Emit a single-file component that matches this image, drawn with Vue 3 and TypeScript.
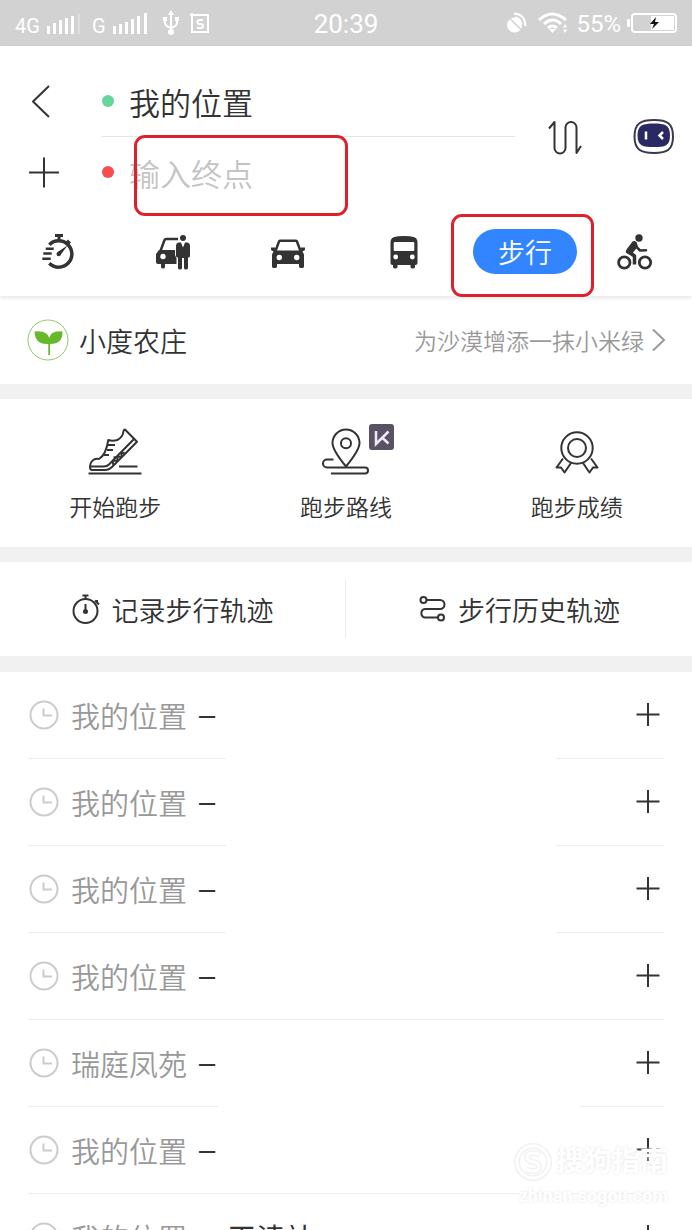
<script setup lang="ts">
import { ref } from 'vue'

interface Trip {
  from: string
  to: string
  rule: 'full' | 'split' | 'narrow'
}

const origin = ref('我的位置')
const destination = ref('')

const trips: Trip[] = [
  { from: '我的位置', to: '', rule: 'split' },
  { from: '我的位置', to: '', rule: 'split' },
  { from: '我的位置', to: '', rule: 'split' },
  { from: '我的位置', to: '', rule: 'full' },
  { from: '瑞庭凤苑', to: '', rule: 'narrow' },
  { from: '我的位置', to: '', rule: 'full' },
  { from: '我的位置', to: '王渎站', rule: 'full' },
]
</script>

<template>
  <div class="page">
    <div class="status">
      <div class="status-side">
        <span class="net">4G</span>
        <svg class="bars" width="36" height="22" viewBox="0 0 36 22" fill="#fff">
          <rect x="1" y="14" width="3" height="8" /><rect x="7" y="11" width="3" height="11" />
          <rect x="13" y="8" width="3" height="14" /><rect x="19" y="6" width="3" height="16" />
          <rect x="25" y="4" width="3" height="18" /><rect x="32" y="2" width="2" height="20" opacity=".3" />
        </svg>
        <span class="net second">G</span>
        <svg class="bars" width="36" height="22" viewBox="0 0 36 22" fill="#fff">
          <rect x="1" y="14" width="3" height="8" /><rect x="7" y="12" width="3" height="10" />
          <rect x="13" y="10" width="3" height="12" /><rect x="19" y="7" width="3" height="15" />
          <rect x="25" y="4" width="3" height="18" /><rect x="32" y="1" width="3" height="21" />
        </svg>
        <svg class="usb" width="18" height="26" viewBox="0 0 18 26" fill="none" stroke="#fff" stroke-width="2">
          <path d="M9 3v18M3 10v3q0 3 6 5M15 9v4q0 3-6 5" />
          <path d="M9 0l3 5H6z" fill="#fff" stroke="none" />
          <circle cx="9" cy="22" r="3" fill="#fff" stroke="none" />
          <path d="M1 7h4v4H1zM13 7h4v4h-4z" fill="#fff" stroke="none" />
        </svg>
        <svg class="sbox" width="22" height="22" viewBox="0 0 22 22" fill="none" stroke="#fff" stroke-width="2">
          <path d="M0 3h18v17H2V1" />
          <path d="M13 8H9.500q-2 0-2 2t2 2h1.500q2 0 2 2t-2 2H7" />
        </svg>
      </div>
      <span class="time">20:39</span>
      <div class="status-side end">
        <svg width="22" height="22" viewBox="0 0 22 22" fill="none" stroke="#fff" stroke-width="2">
          <circle cx="8.500" cy="13" r="7.500" fill="#fff" stroke="none" />
          <path d="M3 5.500L16 18.500" stroke="#d2d2d2" stroke-width="1.500" />
          <path d="M8 1.500Q19 2 19.500 14M9 5.500Q15 7 15.500 12" />
        </svg>
        <svg class="wifi" width="30" height="22" viewBox="0 0 30 22" fill="none" stroke="#fff" stroke-width="3">
          <path d="M1 8Q14-4 28 8M6 12Q15 4 23 12M10 16Q14.500 12 19 16" />
          <path d="M11 17h7l-3.500 4z" fill="#fff" stroke="none" />
          <path d="M27 12l2 3.500h-4zM27 21l2-3.500h-4z" fill="#fff" stroke="none" />
        </svg>
        <span class="percent">55%</span>
        <svg width="50" height="20" viewBox="0 0 50 20">
          <rect x="5" y="1" width="44" height="18" rx="3" fill="none" stroke="#fff" stroke-width="2" />
          <rect x="24" y="3" width="23" height="14" fill="#fff" />
          <rect x="0" y="6" width="3" height="8" rx="1" fill="#fff" />
          <path d="M29 4l-6 7h4l-2 5 7-7h-4z" fill="#111" />
        </svg>
      </div>
    </div>

    <header class="header">
      <div class="route">
        <div class="fields">
          <div class="field">
            <button class="icon-btn" aria-label="返回">
              <svg width="36" height="36" viewBox="0 0 36 36" class="line"><path d="M23 3L7 18.500 23 34" /></svg>
            </button>
            <span class="dot green"></span>
            <input v-model="origin" class="place" type="text" aria-label="起点" />
          </div>
          <div class="field-rule"></div>
          <div class="field">
            <button class="icon-btn" aria-label="添加途经点">
              <svg width="36" height="36" viewBox="0 0 36 36" class="line"><path d="M3 18.500h30M18 3.500v30" /></svg>
            </button>
            <span class="dot red"></span>
            <div class="target">
              <input v-model="destination" class="place" type="text" placeholder="输入终点" aria-label="终点" />
              <span class="mark mark-input"></span>
            </div>
          </div>
        </div>
        <button class="icon-btn swap" aria-label="交换起终点">
          <svg width="36" height="36" viewBox="0 0 36 36" class="line">
            <path d="M2 9.500L7.500 3v26a5.500 5.500 0 0 0 11 0V8.500a5.500 5.500 0 0 1 11 0V34L34 27" />
          </svg>
        </button>
        <button class="icon-btn robot" aria-label="语音助手">
          <svg width="42" height="36" viewBox="0 0 42 36">
            <path d="M21 1C34 1 40 4 40 17.500S34 34 21 34 1.500 31 1.500 17.500 8 1 21 1z" fill="#fff" stroke="#3b394c" stroke-width="2" />
            <path d="M21 4.500C32 4.500 37 6 37 16.500S32 28 21 28 4.500 27 4.500 16.500 10 4.500 21 4.500z" fill="#2b2963" />
            <path d="M13 12.500v8" stroke="#fff" stroke-width="2.500" />
            <path d="M30 13L26.500 16.500 30 20" fill="none" stroke="#fff" stroke-width="2.500" />
          </svg>
        </button>
      </div>

      <nav class="modes">
        <button class="mode" aria-label="智行">
          <svg width="36" height="36" viewBox="0 0 36 36" class="solid">
            <path d="M9.300 10.700A13.200 13.200 0 1 1 9.300 29.300" fill="none" stroke="#333" stroke-width="3.500" />
            <path d="M15 0h8v3h-2.500v3h-3V3H15zM28 5.500l3 3-2.500 2.500-3-3z" />
            <path d="M5.700 14.700h8M3.300 19.500h8.400M2.300 24.700h8.400" stroke="#333" stroke-width="2.500" />
            <path d="M27.500 11.500L20.500 21l-3-3z" /><circle cx="18.700" cy="20" r="2.200" />
          </svg>
        </button>
        <button class="mode" aria-label="打车">
          <svg width="36" height="36" viewBox="0 0 36 36" class="solid">
            <path d="M23 5H11.500Q10 5 9.500 6L5.500 17" fill="none" stroke="#333" stroke-width="2.500" />
            <path d="M4 16h16v5l1.500 3v6H10v3q0 1.500-2 1.500T6 33v-3H3q-2 0-2-2v-8z" />
            <circle cx="8" cy="22.500" r="2.700" fill="#fff" />
            <circle cx="28" cy="4" r="3" />
            <path d="M23.500 8.500H26l2 5 2-5h2.500Q35 9 35 12v10q0 1.500-2 1.500V34q0 1.500-2 1.500T29 34V24h-2v10q0 1.500-2 1.500T23 34V23.500q-2 0-2-1.500V12q0-3 2.500-3.500z" />
          </svg>
        </button>
        <button class="mode" aria-label="驾车">
          <svg width="36" height="36" viewBox="0 0 36 36" class="solid">
            <path d="M5.500 17L9 7.500Q9.500 6.700 10.500 6.700h15q1 0 1.500.8L30.500 17" fill="none" stroke="#333" stroke-width="2.500" />
            <path d="M1 13.500h4v3h26v-3h4v2.500l-2.500 1.500 1.500 3v12q0 1.500-2 1.500h-1q-2 0-2-1.500V30H7v2.500Q7 34 5 34H4q-2 0-2-1.500v-12l1.500-3L1 16z" />
            <circle cx="9.300" cy="23.500" r="2.700" fill="#fff" /><circle cx="26.700" cy="23.500" r="2.700" fill="#fff" />
          </svg>
        </button>
        <button class="mode" aria-label="公交">
          <svg width="36" height="36" viewBox="0 0 36 36" class="solid">
            <path d="M5 6q0-4 13-4t13 4l.5 1.500V29q0 2-2 2H29v2q0 1.500-2.200 1.500T24.500 33v-2h-13v2q0 1.500-2.200 1.500T7 33v-2h-.5q-2 0-2-2V7.500z" />
            <rect x="7.700" y="8" width="20.600" height="9" rx="1" fill="#fff" />
            <circle cx="9.700" cy="23" r="2.400" fill="#fff" /><circle cx="26.300" cy="23" r="2.400" fill="#fff" />
          </svg>
        </button>
        <div class="mode-current">
          <button class="pill" aria-pressed="true">步行</button>
          <span class="mark mark-mode"></span>
        </div>
        <button class="mode" aria-label="骑行">
          <svg width="36" height="36" viewBox="0 0 36 36" class="solid">
            <g fill="none" stroke="#333">
              <circle cx="7.300" cy="28.500" r="5.700" stroke-width="2.800" /><circle cx="28" cy="28.500" r="5.700" stroke-width="2.800" />
              <path d="M18.500 12l4.500 4.500 6-.3" stroke-width="2.500" stroke-linecap="round" />
              <path d="M11.500 18l6 4v8.500" stroke-width="3.500" stroke-linejoin="round" />
            </g>
            <circle cx="22" cy="4" r="3.700" />
            <path d="M15.500 7.500q2-1 4 .5l1.500 4.500L16 18.500l2 2.500-7-1Q7.500 18.500 9.500 15.500z" />
          </svg>
        </button>
      </nav>
    </header>

    <section class="farm">
      <svg width="42" height="42" viewBox="0 0 42 42">
        <circle cx="21" cy="21" r="20" fill="#fff" stroke="#8fcb63" />
        <path d="M7.500 12.500Q20 11 22.300 19 24 11 35.500 12.500 36 25 23 25v11h-1.700V25Q8 26 7.500 12.500z" fill="#68b82e" />
      </svg>
      <span class="farm-name">小度农庄</span>
      <a class="farm-link" href="#">
        <span>为沙漠增添一抹小米绿</span>
        <svg width="14" height="24" viewBox="0 0 14 24" fill="none" stroke="#999" stroke-width="2"><path d="M1 1.500L12 12 1 22.500" /></svg>
      </a>
    </section>

    <section class="run">
      <button class="run-item">
        <svg width="56" height="48" viewBox="0 0 56 48" class="line">
          <path d="M38 1.500l12 12.200L25 39q-3 3-6 3H5q-2 0-2-3 0-5 4-7.500 2-1 5-.500Q19 27 21.300 12q4 1.500 9 0Q36 9 36.500 3q.5-1.500 1.500-1.500z" />
          <path d="M3 38.500h14q3 0 5-2L47.500 10.500M21 17h7M20 22h6M17 27h5" />
          <path d="M25.500 33l1 4.500M30 29l-3.500 0.500M30 29l1 4M34 24.500l1 4M30 29l4.500-.5M25.500 33l5-.5M34 24.500l4 1" />
          <path d="M1.500 45.500h53M32 38.500h18.500" />
        </svg>
        <span>开始跑步</span>
      </button>
      <button class="run-item">
        <span class="run-icon">
          <svg width="56" height="48" viewBox="0 0 56 48" class="line">
            <path d="M28 38.500Q14.500 22 14.500 15a13.500 13.500 0 0 1 27 0Q41.500 22 28 38.500z" />
            <circle cx="28" cy="15.300" r="5" />
            <path d="M15.500 31.500H9a4 4 0 0 0 0 8h38a3 3 0 0 1 0 6H13" />
          </svg>
          <svg class="badge" width="25" height="26" viewBox="0 0 25 26">
            <rect width="25" height="26" rx="3" fill="#595265" />
            <path d="M7 7v13L19.500 7.500M13 13.500l6.500 6" fill="none" stroke="#efe9f7" stroke-width="2.500" />
          </svg>
        </span>
        <span>跑步路线</span>
      </button>
      <button class="run-item">
        <svg width="56" height="48" viewBox="0 0 56 48" class="line">
          <circle cx="28" cy="20" r="15.700" /><circle cx="28" cy="20" r="9" />
          <path d="M14 30.500l-6.500 9H12l3.500 5L22 35M42 30.500l6.500 9H44l-3.500 5L34 35" />
        </svg>
        <span>跑步成绩</span>
      </button>
    </section>

    <section class="tracks">
      <button class="track">
        <svg width="30" height="30" viewBox="0 0 30 30" class="line">
          <circle cx="13.500" cy="17" r="12" /><path d="M10.500 1.500h6M13.500 1.500V5M13.500 10v8M23 6.500l4 4M25 6v3" />
          <circle cx="13.500" cy="17.500" r="1.500" fill="#333" />
        </svg>
        <span>记录步行轨迹</span>
      </button>
      <button class="track">
        <svg width="30" height="30" viewBox="0 0 30 30" class="line">
          <circle cx="5.500" cy="6" r="3" /><circle cx="23" cy="23.500" r="3" />
          <path d="M8.500 6H22a4.500 4.500 0 0 1 0 9H7a4.300 4.300 0 0 0 0 8.500h13" />
        </svg>
        <span>步行历史轨迹</span>
      </button>
    </section>

    <ul class="history">
      <li v-for="(trip, i) in trips" :key="i">
        <div class="trip">
          <svg width="30" height="30" viewBox="0 0 30 30" fill="none" stroke="#ccc" stroke-width="2">
            <circle cx="15" cy="15" r="13.500" /><path d="M14.500 8.500v7H23" />
          </svg>
          <span class="from">{{ trip.from }}</span>
          <span class="dash">–</span>
          <span class="to">{{ trip.to }}</span>
          <button class="icon-btn" aria-label="添加">
            <svg width="24" height="24" viewBox="0 0 24 24" class="line"><path d="M0.500 11.500h23M12 0v23" /></svg>
          </button>
        </div>
        <div class="rule" :class="trip.rule"><span></span><span></span></div>
      </li>
    </ul>

    <div class="watermark">
      <div class="brand">
        <svg width="40" height="40" viewBox="0 0 40 40" fill="none">
          <g stroke="#f1f1f1" stroke-width="6"><circle cx="19" cy="20" r="16" /><path d="M26 13q-3-2-7-2-6 0-6 4t6 5 6 5-6 4q-4 0-7-2" /></g>
          <g stroke="#fff" stroke-width="3"><circle cx="19" cy="20" r="16" /><path d="M26 13q-3-2-7-2-6 0-6 4t6 5 6 5-6 4q-4 0-7-2" /></g>
        </svg>
        <span>搜狗指南</span>
      </div>
      <span class="site">zhinan.sogou.com</span>
    </div>
  </div>
</template>

<style>
body {
  margin: 0;
  background: #fff;
}
</style>

<style scoped>
.page {
  position: relative;
  display: flex;
  flex-direction: column;
  height: 100vh;
  overflow: hidden;
  background: #fff;
  color: #333;
  font-family: Roboto, "Noto Sans CJK SC", sans-serif;
  font-weight: 350;
}
.page > * {
  flex-shrink: 0;
}
button,
input {
  margin: 0;
  padding: 0;
  border: 0;
  background: none;
  color: inherit;
  font: inherit;
}
button {
  cursor: pointer;
}
svg {
  display: block;
  flex: none;
}
.line {
  fill: none;
  stroke: #333;
  stroke-width: 2;
  stroke-linejoin: round;
}
.solid {
  fill: #333;
}
.icon-btn {
  display: block;
  flex: none;
}

.status {
  display: grid;
  grid-template-columns: 1fr auto 1fr;
  align-items: center;
  height: 46px;
  padding: 0 15px;
  background: #d2d2d2;
  color: #fff;
  font-weight: 400;
}
.status-side {
  display: flex;
  align-items: center;
}
.end {
  justify-content: flex-end;
}
.net {
  margin-top: 6px;
  font-size: 20px;
  line-height: 24px;
}
.second {
  margin-left: 10px;
}
.bars {
  margin-left: 6px;
}
.usb {
  margin-left: 14px;
}
.sbox {
  margin-left: 10px;
}
.time {
  padding-top: 2px;
  font-size: 26px;
  line-height: 44px;
}
.wifi {
  margin-left: 10px;
}
.percent {
  margin: 0 6px 0 8px;
  padding-top: 2px;
  font-size: 24px;
  line-height: 44px;
}

.header {
  position: relative;
  z-index: 1;
  padding-top: 20px;
  background: #fff;
  box-shadow: 0 2px 4px rgba(0, 0, 0, 0.1);
}
.route {
  display: flex;
  align-items: center;
  padding: 0 17px 0 26px;
}
.fields {
  flex: 1;
  min-width: 0;
}
.field {
  display: flex;
  align-items: center;
  height: 70px;
}
.field-rule {
  height: 1px;
  margin-left: 76px;
  background: #e4e4e4;
}
.dot {
  flex: none;
  width: 12px;
  height: 12px;
  margin: 0 15px 0 40px;
  border-radius: 50%;
}
.green {
  background: #64d69c;
}
.red {
  background: #f44f4f;
}
.place {
  display: block;
  flex: 1;
  box-sizing: border-box;
  width: 100%;
  min-width: 0;
  height: 48px;
  font-family: "Noto Sans CJK SC", sans-serif;
  font-size: 31px;
  outline: none;
}
.place::placeholder {
  color: #c4c4c4;
  opacity: 1;
}
.target {
  position: relative;
  flex: 1;
}
.mark {
  position: absolute;
  box-sizing: border-box;
  border: 3px solid #de202c;
  border-radius: 11px;
  pointer-events: none;
}
.mark-input {
  top: -13px;
  left: 5px;
  width: 214px;
  height: 81px;
}
.swap {
  margin-left: 32px;
}
.robot {
  margin-left: 50px;
}

.modes {
  display: grid;
  grid-template-columns: 115fr 115fr 115fr 115fr 127fr 93fr;
  align-items: center;
  height: 89px;
  padding-right: 10px;
}
.mode {
  display: flex;
  justify-content: center;
}
.mode-current {
  position: relative;
  justify-self: center;
}
.pill {
  display: block;
  box-sizing: border-box;
  width: 104px;
  height: 45px;
  padding-top: 4px;
  border-radius: 23px;
  background: #3385ff;
  color: #fff;
  font-size: 27px;
  line-height: 36px;
}
.mark-mode {
  top: -15px;
  left: -22px;
  width: 143px;
  height: 83px;
}

.farm {
  display: flex;
  align-items: center;
  height: 88px;
  padding: 0 26px 0 27px;
  border-bottom: 15px solid #f1f1f1;
}
.farm-name {
  margin-left: 10px;
  font-size: 27px;
}
.farm-link {
  display: flex;
  align-items: center;
  gap: 8px;
  margin-left: auto;
  color: #999;
  font-size: 23px;
  text-decoration: none;
}

.run {
  display: grid;
  grid-template-columns: repeat(3, 1fr);
  padding: 29px 0 22px;
  border-bottom: 15px solid #f1f1f1;
}
.run-item {
  display: flex;
  flex-direction: column;
  align-items: center;
  gap: 17px;
  font-size: 23px;
  line-height: 32px;
}
.run-icon {
  position: relative;
}
.badge {
  position: absolute;
  top: -4px;
  left: 51px;
}

.tracks {
  display: grid;
  grid-template-columns: repeat(2, 1fr);
  align-items: center;
  height: 94px;
  border-bottom: 16px solid #f1f1f1;
}
.track {
  display: flex;
  align-items: center;
  justify-content: center;
  gap: 10px;
  height: 58px;
  font-size: 27px;
}
.track:first-child {
  border-right: 1px solid #ececec;
}

.history {
  margin: 0;
  padding: 0;
  list-style: none;
}
.trip {
  display: flex;
  align-items: center;
  box-sizing: border-box;
  height: 86px;
  padding: 0 32px 0 29px;
  font-size: 29px;
}
.from {
  margin-left: 12px;
  color: #999;
}
.dash {
  margin: 0 12px;
  font-family: "Liberation Sans", sans-serif;
}
.to {
  flex: 1;
  font-weight: 400;
}
.rule {
  display: flex;
  justify-content: space-between;
  height: 1px;
  margin: 0 28px;
}
.full {
  background: #eee;
}
.split span,
.narrow span {
  background: #eee;
}
.split span:first-child {
  width: 198px;
}
.split span:last-child {
  width: 108px;
}
.narrow span:first-child {
  width: 190px;
}
.narrow span:last-child {
  width: 84px;
}

.watermark {
  position: absolute;
  right: 24px;
  bottom: 24px;
  z-index: 2;
  color: #fff;
  font-weight: 700;
  text-align: right;
  text-shadow: 0 0 3px #e4e4e4;
  pointer-events: none;
}
.brand {
  display: flex;
  align-items: center;
  gap: 2px;
  font-size: 28px;
  line-height: 40px;
}
.site {
  display: block;
  margin-top: 4px;
  font-size: 18px;
  line-height: 20px;
}
</style>
